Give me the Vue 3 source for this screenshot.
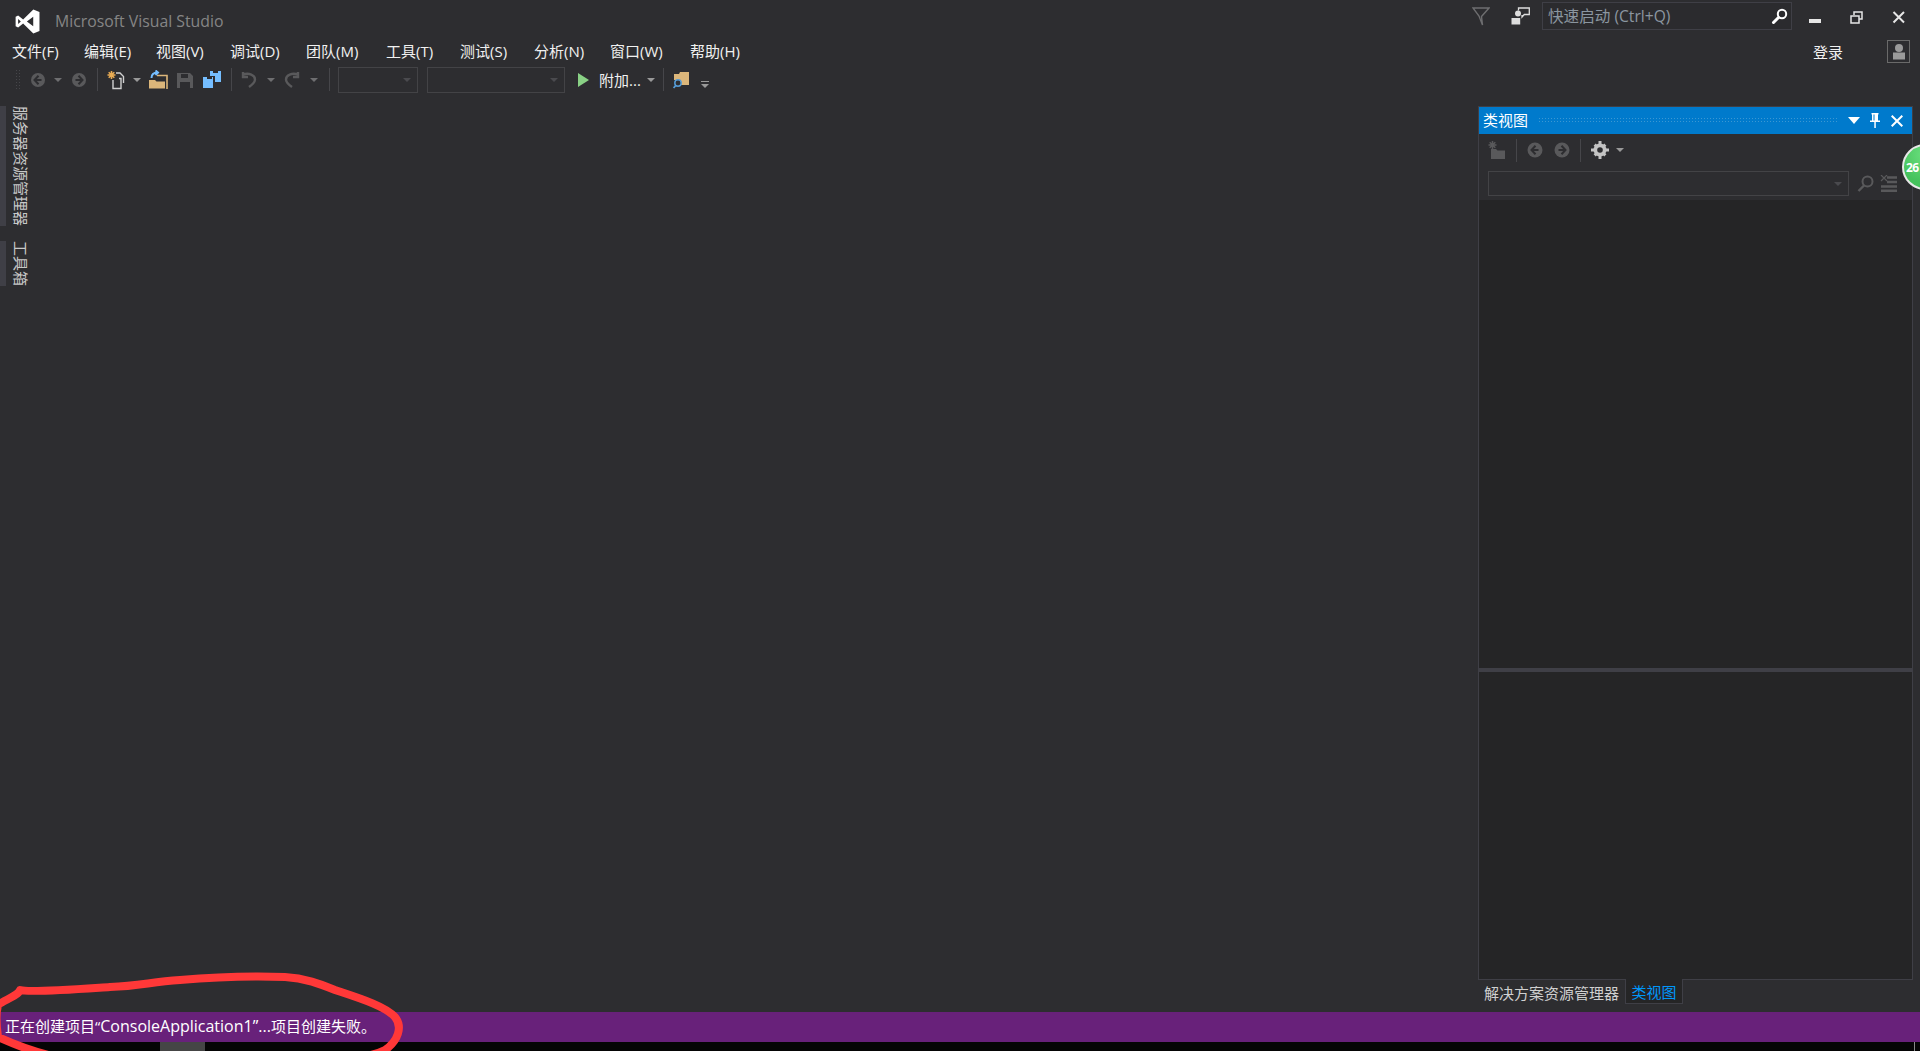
<script setup>
const menus = [
  { label: '文件(F)', w: 72 }, { label: '编辑(E)', w: 72 }, { label: '视图(V)', w: 74 },
  { label: '调试(D)', w: 76 }, { label: '团队(M)', w: 80 }, { label: '工具(T)', w: 74 },
  { label: '测试(S)', w: 74 }, { label: '分析(N)', w: 76 }, { label: '窗口(W)', w: 80 }, { label: '帮助(H)', w: 70 },
]
</script>

<template>
  <div class="app">
    <header class="titlebar">
      <svg class="logo" width="25" height="25" viewBox="0 0 24 24"><path fill="#fff" fill-rule="evenodd" d="M17.6.4 7.8 10 3 6.3.6 7.5v9l2.4 1.2L7.8 14l9.8 9.6 5.900-2.400V2.800zM3 9.500 5.600 12 3 14.500zM17.500 7.400v9.200L11.400 12z"/></svg>
      <span class="app-title">Microsoft Visual Studio</span>
      <div class="spacer"></div>
      <svg class="filter" width="18" height="19" viewBox="0 0 18 19"><path fill="none" stroke="#6e6e70" stroke-width="1.400" d="M1 1h16L9.500 9.500 10.500 18 7 9z"/></svg>
      <svg class="feedback" width="19" height="18" viewBox="0 0 19 18"><path fill="#ddd" d="M4 6.500a3 3 0 1 1 6 0 3 3 0 0 1-6 0zM.500 11h8.700v6.500H.500z"/><path fill="none" stroke="#ddd" stroke-width="1.300" d="M7.500 3.500V1h10.800v6.500h-5L11 10V8"/></svg>
      <div class="quick">
        <span class="quick-text">快速启动 (Ctrl+Q)</span>
        <svg width="17" height="17" viewBox="0 0 17 17"><circle cx="11" cy="6" r="4.200" fill="none" stroke="#fff" stroke-width="2"/><path stroke="#fff" stroke-width="3" stroke-linecap="round" d="M7.500 9.500 2.500 14.500"/></svg>
      </div>
      <div class="winbtns">
        <svg width="42" height="30" viewBox="0 0 42 30"><path fill="#e6e6e6" d="M15 19h12v4H15z"/></svg>
        <svg width="42" height="30" viewBox="0 0 42 30"><path fill="none" stroke="#e6e6e6" stroke-width="1.500" d="M18 15v-3h8v7h-3M15 16h8v7h-8z"/></svg>
        <svg width="42" height="30" viewBox="0 0 42 30"><path stroke="#e6e6e6" stroke-width="2" d="m15.500 12 10.500 10.500M26 12 15.500 22.500"/></svg>
      </div>
    </header>

    <nav class="menubar">
      <span v-for="m in menus" :key="m.label" class="menu-item" :style="{ width: m.w + 'px' }">{{ m.label }}</span>
      <div class="spacer"></div>
      <span class="signin">登录</span>
      <div class="avatar">
        <svg width="21" height="21" viewBox="0 0 21 21"><circle cx="11" cy="7" r="4" fill="#9a9a9a"/><path fill="#9a9a9a" d="M5 11.500h12v7H5z"/></svg>
      </div>
    </nav>

    <div class="toolbar">
      <div class="grip"></div>
      <svg class="ic i-back" width="16" height="16" viewBox="0 0 16 16"><circle cx="8" cy="8" r="7" fill="#59595b"/><path fill="none" stroke="#2d2d30" stroke-width="2" d="M8.500 3.800 4.500 8l4 4.200M5 8h6.500"/></svg>
      <i class="caret c1"></i>
      <svg class="ic i-fwd" width="16" height="16" viewBox="0 0 16 16"><circle cx="8" cy="8" r="7" fill="#59595b"/><path fill="none" stroke="#2d2d30" stroke-width="2" d="M7.500 3.800 11.500 8l-4 4.200M11 8H4.500"/></svg>
      <b class="sep s1"></b>
      <svg class="ic i-new" width="20" height="20" viewBox="0 0 20 20"><path stroke="#e8ab53" stroke-width="1.600" d="M5.500 1v8M1.500 5h8M2.700 2.200l5.600 5.600M8.300 2.200 2.700 7.800"/><path fill="none" stroke="#d0d0d0" stroke-width="1.400" d="M10 3h4l3.500 3.500V13M7 10v8.500h8V8.500h-2"/></svg>
      <i class="caret c2"></i>
      <svg class="ic i-open" width="19" height="20" viewBox="0 0 19 20"><path fill="#dcb67a" d="M0 10h6l1.500 1.500H16v7H0z"/><path fill="none" stroke="#dcb67a" stroke-width="1.600" d="M8 5.500h10V19"/><path fill="none" stroke="#75beff" stroke-width="2" d="M2.500 8c0-3.500 2-5.500 6-5.500M6.500.5l2.500 2-2.500 2.500"/></svg>
      <svg class="ic i-save" width="16" height="16" viewBox="0 0 16 16"><path fill="#59595b" fill-rule="evenodd" d="M0 1h13l3 3v12H0zM4 2v4h7V2zM3 10v6h10v-6z"/></svg>
      <svg class="ic i-saveall" width="18" height="17" viewBox="0 0 18 17"><path fill="#75beff" d="M0 6h4v2h5V6h1v11H0zM7 0h3v2h5V0h3v11h-6V5H7z"/></svg>
      <b class="sep s2"></b>
      <svg class="ic i-undo" width="16" height="18" viewBox="0 0 16 18"><path fill="none" stroke="#59595b" stroke-width="2.400" d="M2 3.500c6-2 12 .5 12 5 0 3-2.500 5-6 7.500M2 1v5h5"/></svg>
      <i class="caret c3"></i>
      <svg class="ic i-redo" width="16" height="18" viewBox="0 0 16 18"><path fill="none" stroke="#59595b" stroke-width="2.400" d="M14 3.500c-6-2-12 .5-12 5 0 3 2.500 5 6 7.500M14 1v5H9"/></svg>
      <i class="caret c4"></i>
      <b class="sep s3"></b>
      <div class="combo c-a"><i class="caret dim"></i></div>
      <div class="combo c-b"><i class="caret dim"></i></div>
      <svg class="ic i-play" width="11" height="14" viewBox="0 0 11 14"><path fill="#89d185" d="M0 0l11 7-11 7z"/></svg>
      <span class="attach">附加...</span>
      <i class="caret c5"></i>
      <b class="sep s4"></b>
      <svg class="ic i-find" width="17" height="18" viewBox="0 0 17 18"><path fill="#dcb67a" d="M1 3h5l1-2h9v13H7V9H1z"/><circle cx="5" cy="12" r="3.200" fill="#2d2d30" stroke="#569cd6" stroke-width="1.500"/><path stroke="#569cd6" stroke-width="1.800" d="M2.800 14.500 .6 17"/></svg>
      <div class="overflow"><span></span><i class="caret"></i></div>
    </div>

    <main class="workspace">
      <aside class="rail">
        <div class="rail-tab tab-server"><span>服务器资源管理器</span></div>
        <div class="rail-tab tab-tools"><span>工具箱</span></div>
      </aside>
      <div class="editor"></div>
      <section class="dock">
        <div class="panel">
          <div class="panel-title">
            <span class="panel-name">类视图</span>
            <div class="dots"></div>
            <svg width="12" height="7" viewBox="0 0 12 7"><path fill="#fff" d="M0 0h12L6 7z"/></svg>
            <svg width="10" height="15" viewBox="0 0 10 15"><path fill="#fff" fill-rule="evenodd" d="M1.500 0h7v1.500H8v6h2v1.500H5.800V15H4.300V9H0V7.500h2v-6h-.5zM3.500 1.500v6h1v-6z"/></svg>
            <svg width="12" height="12" viewBox="0 0 12 12"><path stroke="#fff" stroke-width="2" d="m.7.700 10.600 10.600M11.300.700.700 11.300"/></svg>
          </div>
          <div class="panel-tools">
            <svg class="pi-new" width="18" height="18" viewBox="0 0 18 18"><path fill="#59595b" d="M3 8h5l1.500 1.500H17V18H3z"/><path stroke="#59595b" stroke-width="1.500" d="M4.500 0v8M.5 4h8M1.700 1.200l5.600 5.600M7.300 1.200 1.700 6.800"/></svg>
            <b class="psep psep1"></b>
            <svg class="pi-back" width="16" height="16" viewBox="0 0 16 16"><circle cx="8" cy="8" r="7.500" fill="#59595b"/><path fill="none" stroke="#2d2d30" stroke-width="2" d="M8.500 3.800 4.500 8l4 4.200M5 8h6.500"/></svg>
            <svg class="pi-fwd" width="16" height="16" viewBox="0 0 16 16"><circle cx="8" cy="8" r="7.500" fill="#59595b"/><path fill="none" stroke="#2d2d30" stroke-width="2" d="M7.500 3.800 11.500 8l-4 4.200M11 8H4.500"/></svg>
            <b class="psep psep2"></b>
            <svg class="pi-gear" width="18" height="18" viewBox="0 0 18 18"><g fill="#c4c4c4"><path d="M7.500 0h3v18h-3zM0 7.500h18v3H0z"/><path d="m2.600 4.700 2.100-2.100 10.700 10.700-2.100 2.100zM13.300 2.600l2.100 2.100L4.700 15.400l-2.100-2.100z"/><circle cx="9" cy="9" r="6.500"/></g><circle cx="9" cy="9" r="2.800" fill="#2d2d30"/></svg>
            <i class="caret gear-caret"></i>
          </div>
          <div class="panel-search">
            <div class="combo psearch"><i class="caret dim"></i></div>
            <svg class="pi-search" width="17" height="17" viewBox="0 0 17 17"><circle cx="10.500" cy="6.500" r="5" fill="none" stroke="#59595b" stroke-width="2"/><path stroke="#59595b" stroke-width="2.400" d="M7 10.500 1.500 16"/></svg>
            <svg class="pi-list" width="17" height="17" viewBox="0 0 17 17"><path stroke="#59595b" stroke-width="2.400" d="M7 7h10M1 11.500h16M1 15.700h16M7 2.500h10"/><path stroke="#59595b" stroke-width="1.200" d="m1 0 6 6M7 0 1 6"/></svg>
          </div>
          <div class="pane upper"></div>
          <div class="splitter"></div>
          <div class="pane lower"></div>
        </div>
        <div class="dock-tabs">
          <span class="dock-tab">解决方案资源管理器</span>
          <span class="dock-tab active">类视图</span>
        </div>
      </section>
    </main>

    <footer class="statusbar">正在创建项目“<span class="latin">ConsoleApplication1”...</span>项目创建失败。</footer>
    <div class="taskbar"><span class="task-thumb"></span><span class="task-line"></span></div>

    <div class="badge">26</div>

    <svg class="scribble" width="420" height="90" viewBox="0 0 420 90">
      <path fill="none" stroke="#ff3838" stroke-width="8" stroke-linecap="round" stroke-linejoin="round" d="M20 29c8 3 60-1 90-3 30-1 40-5 70-7 35-3 75-4 105-3 20 1 35 7 50 13 24 8 50 16 60 27 8 10 3 24-10 33-20 10-60 12-120 12H90C50 98 20 86-2 76-4 62-4 52-2 44c6-5 20-9 22-15z"/>
    </svg>
  </div>
</template>

<style>
html, body { margin: 0; background: #2d2d30; }
</style>

<style scoped>
.app {
  position: relative;
  width: 1920px;
  height: 1051px;
  overflow: hidden;
  display: flex;
  flex-direction: column;
  background: #2d2d30;
  color: #f1f1f1;
  font-family: "Open Sans", "Noto Sans CJK SC", sans-serif;
  font-size: 14px;
}
.spacer { flex: 1; }

.titlebar { height: 38px; display: flex; align-items: flex-start; flex: none; }
.logo { margin: 9px 0 0 15px; }
.app-title { margin: 11px 0 0 15px; font-size: 15.8px; line-height: 20px; color: #858585; }
.filter { margin: 7px 21px 0 0; }
.feedback { margin: 7px 12px 0 0; }
.quick {
  width: 250px; height: 28px; margin-top: 2px; box-sizing: border-box;
  border: 1px solid #3f3f46; background: #2b2b2e;
  display: flex; align-items: center; justify-content: space-between; padding: 0 3px 0 5px;
}
.quick-text { color: #8b96a0; font-size: 15.6px; line-height: 24px; }
.winbtns { display: flex; width: 128px; padding-left: 2px; box-sizing: border-box; }
.winbtns svg { flex: none; }

.menubar { height: 27px; flex: none; display: flex; align-items: center; padding-left: 12px; }
.menu-item { font-size: 15px; line-height: 27px; color: #f1f1f1; }
.signin { font-size: 15px; margin: 0 44px 0 0; color: #f1f1f1; }
.avatar {
  width: 23px; height: 23px; margin: -1px 10px 0 0; box-sizing: border-box;
  border: 1px solid #6a6a6a; display: flex; align-items: center; justify-content: center;
}

.toolbar { height: 30px; padding: 0 0 1px 15px; box-sizing: border-box; flex: none; display: flex; align-items: center; }
.grip {
  width: 5px; height: 21px; margin-right: 10px;
  background-image: radial-gradient(#46464a 1px, transparent 1px);
  background-size: 3px 3px;
}
.ic { flex: none; }
.caret {
  display: block; flex: none; width: 0; height: 0;
  border-left: 4px solid transparent; border-right: 4px solid transparent;
  border-top: 4px solid #6e6e70;
}
.caret.dim { border-top-color: #4a4a4e; }
.c1 { margin: 0 9px 0 8px; }
.sep { display: block; flex: none; width: 1px; height: 23px; background: #46464a; }
.s1 { margin: 0 8px 0 10px; }
.c2 { margin: 0 8px 0 7px; border-top-color: #999; }
.i-open { margin-right: 9px; }
.i-save { margin-right: 10px; }
.s2 { margin: 0 9px 0 10px; }
.c3 { margin: 0 9px 0 10px; }
.c4 { margin: 0 11px 0 10px; }
.s3 { margin: 0 8px 0 0; }
.combo {
  box-sizing: border-box; height: 26px; border: 1px solid #434346;
  display: flex; align-items: center; justify-content: flex-end; padding-right: 6px; flex: none;
}
.c-a { width: 80px; margin-right: 9px; }
.c-b { width: 138px; margin-right: 13px; }
.attach { margin-left: 10px; font-size: 15px; color: #f1f1f1; width: 48px; }
.c5 { border-top-color: #999; }
.s4 { margin: 0 9px 0 8px; }
.i-find { margin-right: 11px; }
.overflow { display: flex; flex-direction: column; gap: 2px; margin-top: 10px; }
.overflow span { display: block; width: 8px; height: 1px; background: #999; }
.overflow .caret { border-top-color: #999; }

.workspace { flex: 1; display: flex; min-height: 0; }
.rail { width: 28px; flex: none; display: flex; flex-direction: column; gap: 15px; padding-top: 11px; }
.rail-tab { display: flex; }
.rail-tab::before { content: ""; display: block; width: 8px; background: #3f3f46; margin-right: 7px; }
.rail-tab span {
  writing-mode: vertical-rl; text-orientation: sideways;
  font-size: 15px; line-height: 15px; color: #c8c8c8;
}
.editor { flex: 1; }

.dock { width: 435px; flex: none; margin-right: 7px; padding-top: 11px; display: flex; flex-direction: column; }
.panel {
  flex: 1; display: flex; flex-direction: column; min-height: 0;
  border: 1px solid #3f3f46;
}
.panel-title {
  height: 27px; flex: none; background: #007acc; display: flex; align-items: center;
  padding: 0 9px 0 4px;
}
.panel-name { font-size: 15px; color: #fff; line-height: 22px; margin-top: -2px; }
.dots {
  flex: 1; height: 7px; margin: 0 10px 0 10px;
  background-image: radial-gradient(#3b97d3 .8px, transparent .9px);
  background-size: 3px 3px;
}
.panel-title svg:nth-of-type(2) { margin: 0 11px 0 10px; }
.panel-tools { height: 29px; box-sizing: border-box; padding: 3px 0 0 9px; flex: none; display: flex; align-items: center; }
.psep { display: block; width: 1px; height: 23px; background: #46464a; flex: none; }
.psep1 { margin: 0 10px; }
.pi-fwd { margin-left: 11px; }
.psep2 { margin: 0 10px; }
.gear-caret { margin-left: 7px; border-top-color: #999; }
.panel-search { height: 37px; box-sizing: border-box; flex: none; display: flex; align-items: flex-start; padding: 8px 0 0 9px; }
.psearch { width: 361px; height: 25px; }
.pi-search { margin: 4px 0 0 8px; }
.pi-list { margin: 4px 0 0 6px; }
.pane { background: #252526; }
.upper { height: 468px; flex: none; }
.splitter { height: 4px; flex: none; background: #3f3f46; }
.lower { flex: 1; }

.dock-tabs { height: 32px; flex: none; display: flex; align-items: flex-start; padding-left: 6px; }
.dock-tab { font-size: 15px; line-height: 26px; color: #d0d0d0; }
.dock-tab.active {
  margin: -1px 0 0 6px; width: 58px; height: 25px; box-sizing: border-box; text-align: center;
  background: #252526; border: 1px solid #3f3f46; border-top: 0; color: #0097fb;
}

.statusbar {
  height: 30px; flex: none; background: #68217a; color: #fff;
  font-size: 15px; line-height: 28px; padding-left: 5px;
}
.latin { font-size: 16px; }
.taskbar { height: 9px; flex: none; background: #050505; display: flex; }
.task-thumb { width: 45px; margin-left: 160px; background: #454545; }
.task-line { width: 1px; margin-left: auto; margin-right: 5px; background: #888; }

.badge {
  position: absolute; left: 1902px; top: 144px; width: 46px; height: 46px; box-sizing: border-box;
  border: 2px solid #e8e8e8; border-radius: 50%;
  background: radial-gradient(circle at 50% 20%, #6be07e, #45c25c 70%);
  color: #fff; font: 700 12px/44px "Open Sans", sans-serif; padding-left: 2px; letter-spacing: -.5px;
}
.scribble { position: absolute; left: 0; bottom: 0; pointer-events: none; }
</style>
